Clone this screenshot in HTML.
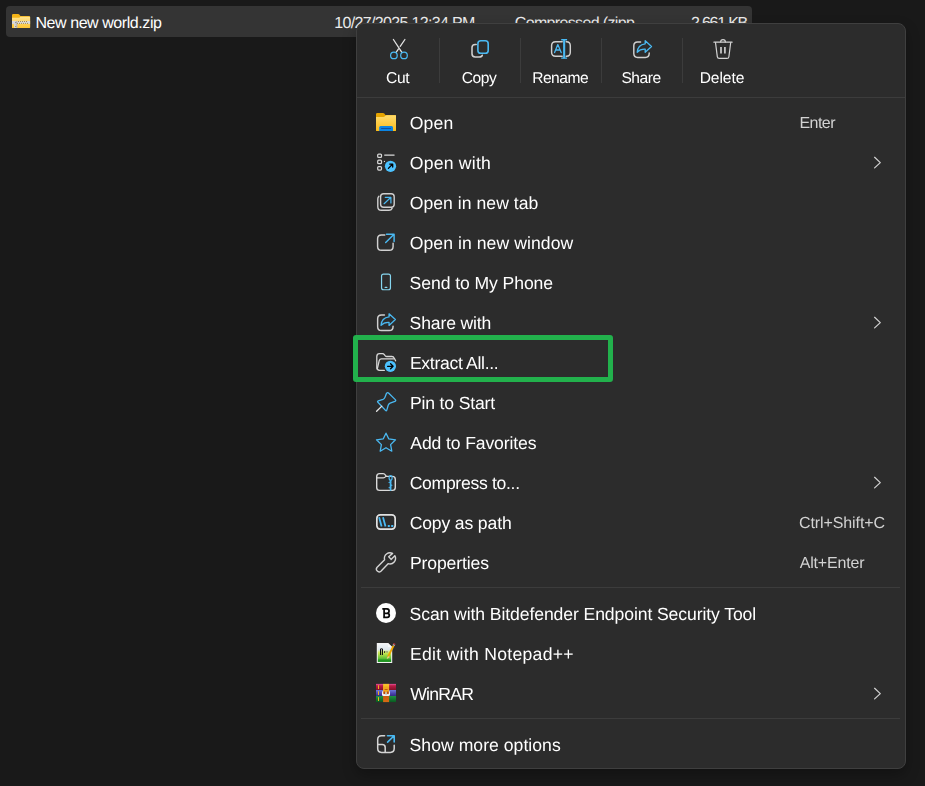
<!DOCTYPE html>
<html><head><meta charset="utf-8">
<style>
*{margin:0;padding:0;box-sizing:border-box}
html,body{width:925px;height:786px;overflow:hidden;background:#191919}
body{font-family:"Liberation Sans",sans-serif;position:relative;color:#fff;text-rendering:geometricPrecision}
#row{position:absolute;left:6px;top:6px;width:746px;height:31px;background:#343434;border-radius:4px}
.rt{position:absolute;top:15px;font-size:16px;line-height:18px;white-space:nowrap}
#menu{position:absolute;left:356px;top:23px;width:550px;height:746px;background:#2c2c2c;border:1px solid #3f3f3f;border-radius:8px;box-shadow:0 6px 14px rgba(0,0,0,.28)}
.hsep{position:absolute;left:361px;width:539px;height:1px;background:#3c3c3c}
.vsep{position:absolute;top:38px;width:1px;height:45px;background:#3c3c3c}
#txt{position:absolute;left:0;top:0;width:925px;height:786px;will-change:transform}
.tl{position:absolute;top:69.6px;font-size:15.6px;line-height:18px;color:#fff;white-space:nowrap}
.it{position:absolute;left:410px;font-size:17.6px;line-height:22px;color:#fff;white-space:nowrap}
.sc{position:absolute;left:800px;font-size:16px;line-height:18px;color:#d2d2d2;white-space:nowrap}
#green{position:absolute;left:353px;top:335px;width:260px;height:47px;border:5px solid #22b14c;border-radius:3px}
#ico{position:absolute;left:0;top:0}
</style></head><body>
<div id="row"></div>
<div class="rt" id="r1" style="left:36.6px;color:#fff;letter-spacing:-0.428px;margin-left:-1.18px">New new world.zip</div>
<div class="rt" id="r2" style="left:336.1px;color:#ececec;letter-spacing:-0.659px;margin-left:-1.81px">10/27/2025 12:34 PM</div>
<div class="rt" id="r3" style="left:515.3px;color:#ececec;letter-spacing:-0.648px;margin-left:-0.59px">Compressed (zipp...</div>
<div class="rt" id="r4" style="left:692px;color:#ececec;letter-spacing:-1.226px;margin-left:-1.0px">2,661 KB</div>
<div id="menu"></div>
<div class="hsep" style="top:97px;left:357px;width:548px"></div>
<div class="hsep" style="top:587px"></div>
<div class="hsep" style="top:718px"></div>
<div class="vsep" style="left:439px"></div>
<div class="vsep" style="left:520px"></div>
<div class="vsep" style="left:601px"></div>
<div class="vsep" style="left:682px"></div>
<div id="txt">
<div class="tl" id="t1" style="left:398px;transform:translateX(-50%);letter-spacing:-0.326px;margin-left:-0.29px">Cut</div>
<div class="tl" id="t2" style="left:479.5px;transform:translateX(-50%);letter-spacing:-0.446px;margin-left:-0.48px">Copy</div>
<div class="tl" id="t3" style="left:560px;transform:translateX(-50%);letter-spacing:-0.51px;margin-left:0.16px">Rename</div>
<div class="tl" id="t4" style="left:641px;transform:translateX(-50%);letter-spacing:-0.452px;margin-left:0.09px">Share</div>
<div class="tl" id="t5" style="left:721.5px;transform:translateX(-50%);letter-spacing:-0.094px;margin-left:0.46px">Delete</div>
<div class="it" id="i1" style="top:112px;letter-spacing:0.22px;margin-left:-0.3px">Open</div>
<div class="it" id="i2" style="top:152px;letter-spacing:0.243px;margin-left:-0.3px">Open with</div>
<div class="it" id="i3" style="top:192px;letter-spacing:0.038px;margin-left:-0.3px">Open in new tab</div>
<div class="it" id="i4" style="top:232px;letter-spacing:0.069px;margin-left:-0.3px">Open in new window</div>
<div class="it" id="i5" style="top:272px;letter-spacing:-0.085px;margin-left:-0.41px">Send to My Phone</div>
<div class="it" id="i6" style="top:312px;letter-spacing:-0.147px;margin-left:-0.41px">Share with</div>
<div class="it" id="i7" style="top:352px;letter-spacing:-0.313px;margin-left:-0.08px">Extract All...</div>
<div class="it" id="i8" style="top:392px;letter-spacing:-0.165px;margin-left:-0.08px">Pin to Start</div>
<div class="it" id="i9" style="top:432px;letter-spacing:-0.133px;margin-left:0.32px">Add to Favorites</div>
<div class="it" id="i10" style="top:472px;letter-spacing:-0.303px;margin-left:-0.37px">Compress to...</div>
<div class="it" id="i11" style="top:512px;letter-spacing:-0.15px;margin-left:-0.37px">Copy as path</div>
<div class="it" id="i12" style="top:552px;letter-spacing:-0.126px;margin-left:-0.08px">Properties</div>
<div class="it" id="i13" style="top:603px;letter-spacing:-0.097px;margin-left:-0.41px">Scan with Bitdefender Endpoint Security Tool</div>
<div class="it" id="i14" style="top:643px;letter-spacing:0.288px;margin-left:-0.08px">Edit with Notepad++</div>
<div class="it" id="i15" style="top:683px;letter-spacing:-0.736px;margin-left:0.14px">WinRAR</div>
<div class="it" id="i16" style="top:734px;letter-spacing:0.032px;margin-left:-0.41px">Show more options</div>
<div class="sc" id="s1" style="top:115px;letter-spacing:-0.534px;margin-left:-0.58px">Enter</div>
<div class="sc" id="s2" style="top:515px;letter-spacing:-0.085px;margin-left:-1.1px">Ctrl+Shift+C</div>
<div class="sc" id="s3" style="top:555px;letter-spacing:-0.166px;margin-left:-0.39px">Alt+Enter</div>
</div>
<svg id="ico" width="925" height="786" viewBox="0 0 925 786" fill="none" stroke-linecap="round" stroke-linejoin="round">
<defs>
<linearGradient id="gf" x1="0" y1="0" x2="0" y2="1"><stop offset="0" stop-color="#ffdc6e"/><stop offset="1" stop-color="#fbbb1a"/></linearGradient>
<linearGradient id="gz" x1="0" y1="0" x2="0" y2="1"><stop offset="0" stop-color="#ffe592"/><stop offset="1" stop-color="#ffc531"/></linearGradient>
<linearGradient id="npp" x1="0" y1="0" x2="0" y2="1"><stop offset="0" stop-color="#f2f5f8"/><stop offset=".3" stop-color="#dfe8ee"/><stop offset=".48" stop-color="#d0ea55"/><stop offset=".8" stop-color="#62c037"/><stop offset=".9" stop-color="#1f9420"/><stop offset="1" stop-color="#2a9a2a"/></linearGradient>
<linearGradient id="wr" x1="0" y1="0" x2="0" y2="1"><stop offset="0" stop-color="#e457a0"/><stop offset=".3" stop-color="#bb1c46"/><stop offset="1" stop-color="#80102a"/></linearGradient>
<linearGradient id="wb" x1="0" y1="0" x2="0" y2="1"><stop offset="0" stop-color="#6f7ad8"/><stop offset=".5" stop-color="#4f49b4"/><stop offset="1" stop-color="#352a84"/></linearGradient>
<linearGradient id="wg" x1="0" y1="0" x2="0" y2="1"><stop offset="0" stop-color="#1f9443"/><stop offset="1" stop-color="#085a20"/></linearGradient>
<linearGradient id="ws" x1="0" y1="0" x2="0" y2="1"><stop offset="0" stop-color="#f7c52c"/><stop offset=".35" stop-color="#f2a41c"/><stop offset=".6" stop-color="#c8560f"/><stop offset="1" stop-color="#d66c14"/></linearGradient>
</defs>
<!-- zip folder (file row) -->
<g stroke="none">
<path d="M12,15.2 Q12,14 13.2,14 H18.2 Q18.9,14 19.3,14.5 L20.4,16 H29 Q30.1,16 30.1,17.1 V28.1 H12 Z" fill="#f5b417"/>
<path d="M12,17.8 H18.6 Q19.4,17.8 19.9,17.3 L20.5,16.7 H30.1 V27 Q30.1,28.1 29,28.1 H13.1 Q12,28.1 12,27 Z" fill="url(#gz)"/>
<rect x="12" y="20.9" width="18.1" height="3" fill="#d9d9d9"/>
<rect x="14.3" y="21" width="3.1" height="6.9" rx=".6" fill="#bdbdbd"/>
<rect x="14.3" y="21" width="1.2" height="6.9" fill="#e3e3e3"/>
<g fill="#a37c22"><rect x="18.1" y="21.1" width=".9" height=".9"/><rect x="20.1" y="21.1" width=".9" height=".9"/><rect x="22.1" y="21.1" width=".9" height=".9"/><rect x="24.1" y="21.1" width=".9" height=".9"/><rect x="26.1" y="21.1" width=".9" height=".9"/>
<rect x="17.1" y="22.9" width=".9" height=".9"/><rect x="19.1" y="22.9" width=".9" height=".9"/><rect x="21.1" y="22.9" width=".9" height=".9"/><rect x="23.1" y="22.9" width=".9" height=".9"/><rect x="25.1" y="22.9" width=".9" height=".9"/><rect x="27.1" y="22.9" width=".9" height=".9"/>
<rect x="15.3" y="22" width=".9" height=".9" fill="#777"/><rect x="15.3" y="26" width=".9" height=".9"/></g>
</g>
<!-- Cut -->
<g stroke="#e2e2e2" stroke-width="1.3"><path d="M393.4,39.5 L401.7,52.1 M404.9,39.5 L400.2,46.3 M398.5,48.9 L396.3,52.1"/></g>
<g stroke="#4ab9f2" stroke-width="1.25"><circle cx="393.9" cy="55.4" r="3.3"/><circle cx="404" cy="55.4" r="3.3"/></g>
<!-- Copy -->
<path d="M476.2,44.4 H475.2 Q472,44.4 472,47.6 V53.7 Q472,56.9 475.2,56.9 H479.2 Q481.9,56.9 482.3,55.2" stroke="#d0d0d0" stroke-width="1.55"/>
<rect x="477.9" y="40.8" width="10.3" height="12.5" rx="2.9" stroke="#4ab9f2" stroke-width="1.6"/>
<!-- Rename -->
<g stroke="#d0d0d0" stroke-width="1.45"><path d="M562.2,41.7 H555.6 Q551.6,41.7 551.6,45.7 V52.3 Q551.6,56.3 555.6,56.3 H562.2"/><path d="M566.2,41.7 H566.4 Q570.3,41.7 570.3,45.7 V52.3 Q570.3,56.3 566.4,56.3 H566.2"/></g>
<g stroke="#4ab9f2"><path d="M561.2,39.7 H567.1 M561.2,58.1 H567.1" stroke-width="1.4" stroke-linecap="butt"/><path d="M564.15,39.4 V58.4" stroke-width="2.1" stroke-linecap="butt"/><path d="M554.6,52.6 L557.8,44.6 L561.2,52.6 M555.9,50 H560" stroke-width="1.3"/></g>
<!-- Share -->
<g><path d="M640.6,41.9 H637.6 Q633.8,41.9 633.8,45.7 V53.6 Q633.8,57.4 637.6,57.4 H645.4 Q649.2,57.4 649.2,53.6 V53" stroke="#d0d0d0" stroke-width="1.45"/>
<path d="M645.2,40.7 L651.5,46.5 L645.2,52.3 V49.2 Q640.2,48.9 637.2,52.3 Q637.6,44.8 645.2,43.8 Z" stroke="#4ab9f2" stroke-width="1.3"/></g>
<!-- Delete -->
<g stroke="#d2d2d2" stroke-width="1.2"><path d="M713.9,42.2 H732.1"/><path d="M720.6,42 Q720.6,39.6 723,39.6 Q725.4,39.6 725.4,42"/><path d="M715.5,42.5 L717.3,56.7 Q717.5,58.4 719.3,58.4 H726.9 Q728.7,58.4 728.9,56.7 L730.7,42.5"/></g>
<path d="M721,46.9 V53.6 M724.9,46.9 V53.6" stroke="#c4c4c4" stroke-width="1.8" stroke-linecap="butt"/>
<!-- Open (explorer) -->
<g stroke="none">
<path d="M376,114.2 Q376,112.9 377.3,112.9 H383 Q383.8,112.9 384.3,113.5 L385.4,114.9 H394.8 Q396,114.9 396,116.1 V131.1 H376 Z" fill="#e6a400"/>
<path d="M376,116.9 H383.4 Q384.3,116.9 384.9,116.3 L385.5,115.7 Q386,115.3 386.7,115.3 H396 V130 Q396,131.1 394.9,131.1 H377.1 Q376,131.1 376,130 Z" fill="url(#gf)"/>
<path d="M379.2,131.1 V127.6 Q379.2,126.1 380.7,126.1 H391.5 Q393,126.1 393,127.6 V131.1 Z" fill="#0b84e2"/>
<rect x="381" y="128" width="10.1" height="1" rx=".4" fill="#114e9c"/>
</g>
<!-- Open with -->
<g stroke="#d8d8d8" stroke-width="1.25"><rect x="377.7" y="154" width="3.8" height="3.4" rx="1"/><rect x="377.7" y="160.2" width="3.8" height="3.5" rx="1"/><rect x="377.7" y="166.5" width="3.8" height="3.6" rx="1"/><path d="M384.7,155.1 H394.1" stroke-width="1.3"/></g>
<circle cx="384.4" cy="161.4" r=".6" fill="#e0e0e0"/>
<circle cx="390.5" cy="166.3" r="5.6" fill="#4cc2ff"/>
<path d="M388.4,168.4 L392.5,164.3 M389.7,164.1 H392.7 V167.1" stroke="#000" stroke-width="1.3"/>
<!-- Open in new tab -->
<g stroke="#d0d0d0" stroke-width="1.4"><rect x="380.6" y="193.7" width="13.6" height="13.5" rx="3"/><path d="M378.9,196.2 Q377.8,197.3 377.8,199 V206.8 Q377.8,210.3 381.3,210.3 H389 Q391.2,210.3 392.1,208.4"/></g>
<path d="M384.1,203.7 L390.7,197.5 M385.3,197.4 H390.9 V202.9" stroke="#4ab9f2" stroke-width="1.2"/>
<!-- Open in new window -->
<path d="M384.8,235 H381.4 Q377.6,235 377.6,238.8 V246.5 Q377.6,250.3 381.4,250.3 H389.3 Q393.1,250.3 393.1,246.5 V243.1" stroke="#d0d0d0" stroke-width="1.45"/>
<path d="M385.7,242.4 L393.8,234.4 M386.5,234.3 H394.1 V241.6" stroke="#4ab9f2" stroke-width="1.45"/>
<!-- Phone -->
<rect x="381.55" y="274.05" width="8.9" height="15.7" rx="2" stroke="#86d6ef" stroke-width="1.2"/>
<path d="M385.1,287.4 H386.9" stroke="#86d6ef" stroke-width="1.1"/>
<!-- Share with -->
<g transform="translate(-256.15,273.1)"><path d="M640.6,41.9 H637.6 Q633.8,41.9 633.8,45.7 V53.6 Q633.8,57.4 637.6,57.4 H645.4 Q649.2,57.4 649.2,53.6 V53" stroke="#d0d0d0" stroke-width="1.45"/>
<path d="M645.2,40.7 L651.5,46.5 L645.2,52.3 V49.2 Q640.2,48.9 637.2,52.3 Q637.6,44.8 645.2,43.8 Z" stroke="#4ab9f2" stroke-width="1.3"/></g>
<!-- Extract All -->
<g stroke="#d8d8d8" stroke-width="1.3"><path d="M384.3,370.4 H379.6 Q376.8,370.4 376.8,367.6 V356.5 Q376.8,353.7 379.6,353.7 H382.5 Q383.6,353.7 384.3,354.6 L385.3,355.9 Q385.8,356.5 386.6,356.5 H391.8 Q393.5,356.5 394.2,358 L395.6,360.8"/><path d="M377.3,368.8 L379.2,360.6 Q379.7,358.8 381.5,358.8 H393.8"/></g>
<circle cx="390.4" cy="366.3" r="5.6" fill="#4cc2ff"/>
<path d="M387.6,366.3 H393.1 M390.6,363.8 L393.1,366.3 L390.6,368.8" stroke="#000" stroke-width="1.3"/>
<!-- Pin -->
<path d="M386.5,393.3 Q387.6,392 388.8,393.2 L395.3,399.6 Q396.4,400.8 394.9,401.4 L390.1,403.2 Q388.7,403.8 388.2,405.2 L386.8,410.1 Q386.4,411.4 385.5,410.4 L377.9,402.3 Q377,401.2 378.3,400.8 L383,399.3 Q384.4,398.8 384.9,397.4 Z" stroke="#4ab9f2" stroke-width="1.3"/>
<path d="M381.8,406.1 L376.6,411.3" stroke="#e6e6e6" stroke-width="1.3"/>
<!-- Star -->
<path d="M386,433.2 L388.7,438.8 L395.5,439.8 L390.6,444.6 L391.8,451.2 L386,447.7 L380.2,451.2 L381.4,444.6 L376.5,439.8 L383.3,438.8 Z" stroke="#4ab9f2" stroke-width="1.3"/>
<!-- Compress -->
<g stroke="#dadada" stroke-width="1.4"><path d="M376.7,476.5 Q376.7,473.6 379.6,473.6 H383.2 Q384.6,473.6 385.3,474.8 L386.3,476.4 H392.4 Q395.3,476.4 395.3,479.3 V487.5 Q395.3,490.4 392.4,490.4 H379.6 Q376.7,490.4 376.7,487.5 Z"/><path d="M376.9,477.8 H383.3 Q384.8,477.8 385.7,476.5" stroke-width="1.2"/></g>
<g stroke="#4ab9f2"><path d="M390.6,480 V490.8" stroke-width="1.6" stroke-linecap="butt"/><ellipse cx="390.6" cy="477.9" rx="1.5" ry="2.2" stroke-width="1.2"/></g>
<path d="M390.6,481.3 L388.5,482.5 L390.6,483.3 Z M390.6,484.2 L392.4,485.3 L390.6,486.2 Z M390.6,486.6 L388.5,487.7 L390.6,488.5 Z" fill="#4ab9f2" stroke="#4ab9f2" stroke-width=".4"/>
<!-- Copy as path -->
<rect x="376.85" y="514.85" width="18.3" height="14.3" rx="3.3" stroke="#e2e2e2" stroke-width="1.7"/>
<path d="M379.1,517.3 L381.6,526.5 M383,517.3 L385.5,526.5" stroke="#4ab9f2" stroke-width="1.8" stroke-linecap="butt"/>
<rect x="387.8" y="525" width="2" height="2" fill="#4ab9f2"/><rect x="391.2" y="525" width="2.1" height="2" fill="#4ab9f2"/>
<!-- Wrench -->
<path d="M392.6,553.4 A5.6,5.6 0 0 0 384.6,559.8 L376.9,567.5 A2.75,2.75 0 0 0 380.9,571.2 L388.1,563.7 A5.6,5.6 0 0 0 394.8,555.7 L391.1,559.4 L388.7,556.8 Z" stroke="#d4d4d4" stroke-width="1.4"/>
<!-- Bitdefender -->
<circle cx="386" cy="613" r="10" fill="#fff"/>
<path d="M382.3,608.85 H387 A2.23,2.23 0 0 1 387,613.3 H384.2 M387.3,613.3 A2,2 0 0 1 387.3,617.3 H383.2 M384.1,608.85 V617.3" stroke="#0a0a0a" stroke-width="1.7" stroke-linecap="butt" stroke-linejoin="miter"/>
<!-- Notepad++ -->
<g stroke="none">
<path d="M376.8,643.1 H388.2 L392.2,646.9 V663 H376.8 Z" fill="#f3f3f3"/>
<path d="M377.8,644.1 H387.8 L391.2,647.3 V662 H377.8 Z" fill="url(#npp)"/>
<path d="M388,643.3 V647 H392 Z" fill="#fafafa"/>
<rect x="380" y="649" width="1.1" height="6" fill="#111"/><rect x="381.9" y="649" width="1.1" height="6" fill="#111"/><rect x="380.5" y="648.3" width="2" height=".9" fill="#222"/>
<rect x="384.1" y="651" width="1" height="2" rx=".4" fill="#111"/><rect x="386.5" y="651" width="1" height="1.8" rx=".4" fill="#777"/>
</g>
<path d="M388,656.9 L393.6,645.6" stroke="#eea600" stroke-width="1.9" stroke-linecap="butt"/>
<path d="M388,656.9 L387.2,658.4 L388.9,657.4 Z" fill="#f0c890" stroke="#f0c890" stroke-width=".8"/>
<path d="M393.6,645.6 L394.1,644.6" stroke="#b9bcc4" stroke-width="2.2" stroke-linecap="butt"/>
<path d="M394.1,644.6 L394.6,643.6" stroke="#c8343c" stroke-width="2.2" stroke-linecap="butt"/>
<!-- WinRAR -->
<g stroke="none">
<rect x="376" y="683.9" width="20" height="6.1" fill="url(#wr)"/>
<rect x="376" y="690" width="20" height="6" fill="url(#wb)"/>
<rect x="376" y="696" width="20" height="6.1" fill="url(#wg)"/>
<rect x="383.1" y="683.9" width="6" height="18.2" fill="url(#ws)"/>
<rect x="382" y="690.8" width="8" height="5.2" rx="1.6" fill="#f4f4f4"/>
<rect x="383.3" y="686.5" width="5.6" height="7.2" rx="1.6" fill="#f0a81e"/>
<rect x="384.6" y="689" width="3" height="1" fill="#c8560f"/>
<rect x="383.4" y="691.5" width="1.6" height="2.6" fill="#b8480c"/><rect x="387.1" y="691.5" width="1.6" height="2.6" fill="#b8480c"/>
<rect x="385.4" y="692" width="1.3" height="3.2" fill="#b8c0c8"/>
<rect x="378" y="685.2" width="1" height="3.8" fill="#f0b020"/><rect x="378" y="691.2" width="1" height="3.8" fill="#f0b020"/><rect x="378" y="697.2" width="1" height="3.8" fill="#f0b020"/>
</g>
<!-- Show more options -->
<g stroke="#d4d4d4" stroke-width="1.5"><path d="M384.6,735.8 H381.5 Q377.7,735.8 377.7,739.6 V748.6 Q377.7,752.4 381.5,752.4 H390.4 Q394.2,752.4 394.2,748.6 V745.2"/><path d="M377.9,744.4 H382.2 Q385.2,744.4 385.2,747.4 V752.2"/></g>
<path d="M387.6,742.1 L393.9,736 M387.5,735.8 H394.2 V742" stroke="#4ab9f2" stroke-width="1.6"/>
<!-- chevrons -->
<g stroke="#d0d0d0" stroke-width="1.25"><path d="M874.6,157.3 L880.3,162.6 L874.6,167.9"/><path d="M874.6,317.3 L880.3,322.6 L874.6,327.9"/><path d="M874.6,477.3 L880.3,482.6 L874.6,487.9"/><path d="M874.6,688.3 L880.3,693.6 L874.6,698.9"/></g>
</svg>

<div id="green"></div>
</body></html>
